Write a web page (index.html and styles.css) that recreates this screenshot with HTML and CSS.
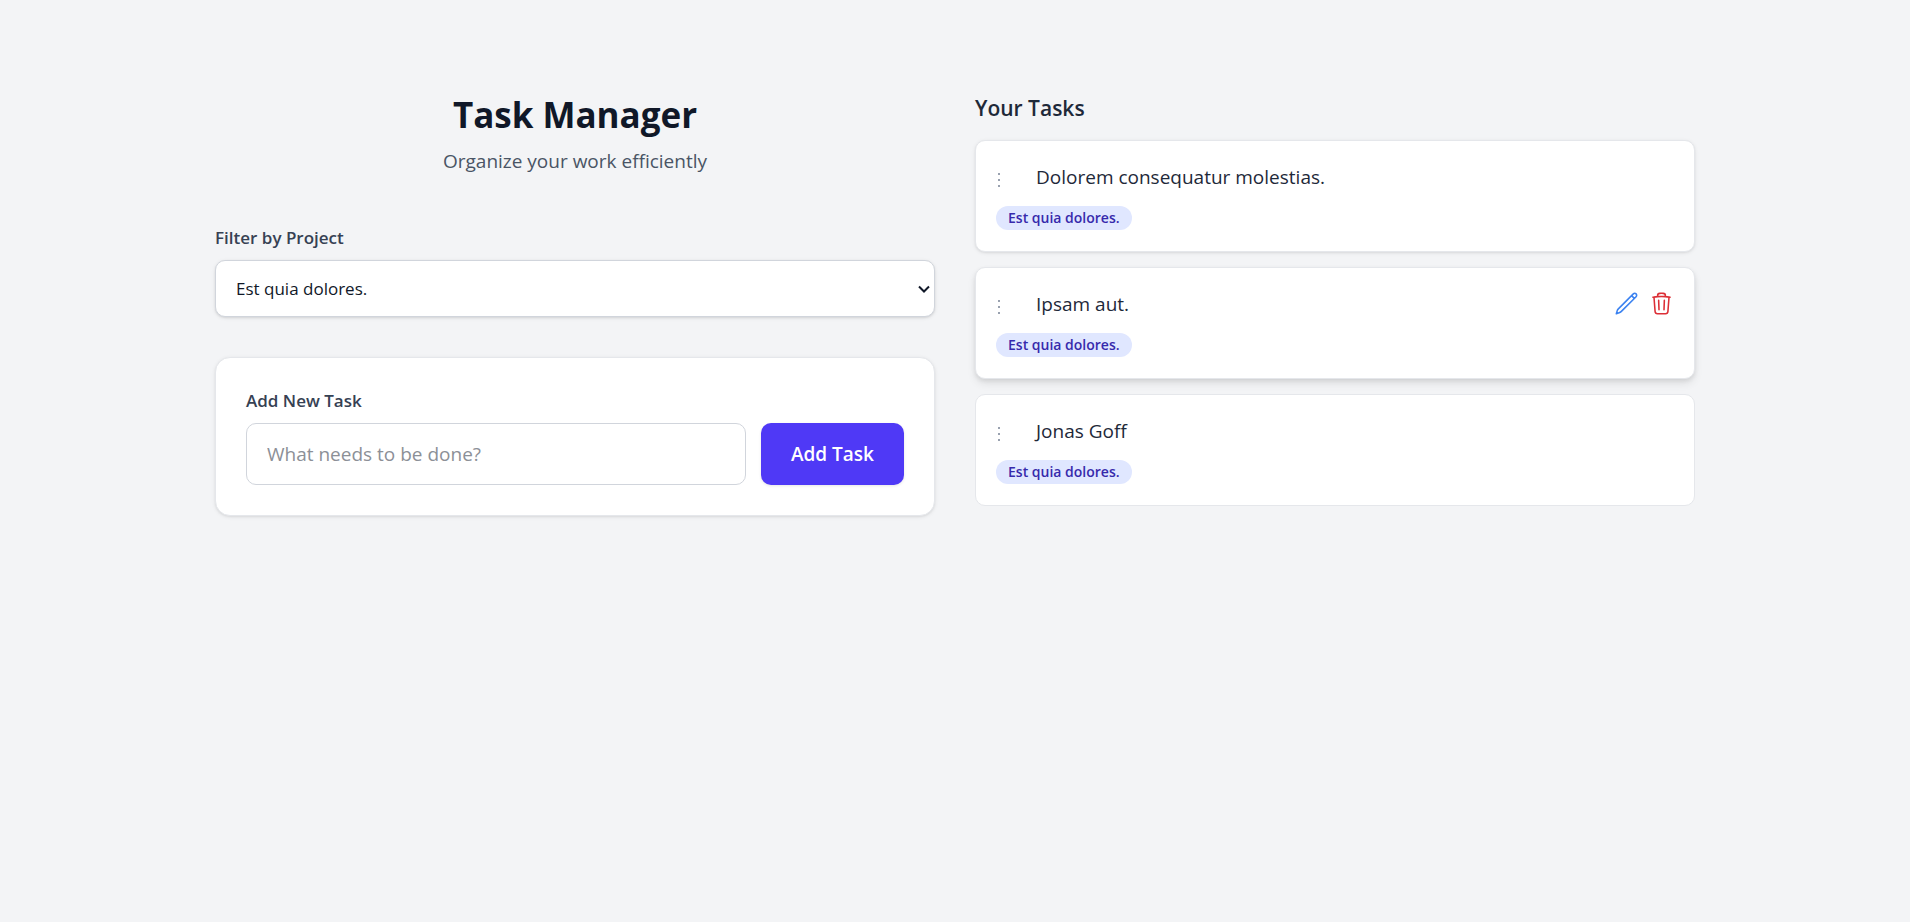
FILE: index.html
```html
<!DOCTYPE html>
<html lang="en">
<head>
<meta charset="utf-8">
<meta name="viewport" content="width=device-width, initial-scale=1">
<title>Task Manager</title>
<link rel="stylesheet" href="styles.css">
</head>
<body>
<main class="page">
  <section class="column">
    <header class="intro">
      <h1 class="title">Task Manager</h1>
      <p class="subtitle">Organize your work efficiently</p>
    </header>
    <div class="filter">
      <label class="label" for="project">Filter by Project</label>
      <div class="select-wrap">
        <select class="select" id="project">
          <option>Est quia dolores.</option>
        </select>
        <svg class="chevron" viewBox="0 0 12 8" aria-hidden="true"><path d="M1 1.5l5 5 5-5"/></svg>
      </div>
    </div>
    <form class="panel">
      <label class="label" for="task">Add New Task</label>
      <div class="panel-row">
        <input class="input" id="task" type="text" placeholder="What needs to be done?">
        <button class="button" type="button">Add Task</button>
      </div>
    </form>
  </section>
  <section class="column">
    <h2 class="heading">Your Tasks</h2>
    <ul class="tasks">
      <li class="task">
        <div class="task-row">
          <svg class="handle" viewBox="0 0 6 16" aria-hidden="true"><path d="M2 1h2v2H2zM2 7h2v2H2zM2 13h2v2H2z"/></svg>
          <span class="task-name">Dolorem consequatur molestias.</span>
        </div>
        <span class="badge">Est quia dolores.</span>
      </li>
      <li class="task task-active">
        <div class="task-row">
          <svg class="handle" viewBox="0 0 6 16" aria-hidden="true"><path d="M2 1h2v2H2zM2 7h2v2H2zM2 13h2v2H2z"/></svg>
          <span class="task-name">Ipsam aut.</span>
          <button class="icon-button edit" type="button" aria-label="Edit task">
            <svg class="icon" viewBox="0 0 24 24"><path d="M16.862 4.487l1.687-1.688a1.875 1.875 0 112.652 2.652L6.832 19.82a4.5 4.5 0 01-1.897 1.13l-2.685.8.8-2.685a4.5 4.5 0 011.13-1.897L16.863 4.487zm0 0L19.5 7.125"/></svg>
          </button>
          <button class="icon-button delete" type="button" aria-label="Delete task">
            <svg class="icon" viewBox="0 0 24 24"><path d="M14.74 9l-.346 9m-4.788 0L9.26 9m9.968-3.21c.342.052.682.107 1.022.166m-1.022-.165L18.16 19.673a2.25 2.25 0 01-2.244 2.077H8.084a2.25 2.25 0 01-2.244-2.077L4.772 5.79m14.456 0a48.108 48.108 0 00-3.478-.397m-12 .562c.34-.059.68-.114 1.022-.165m0 0a48.11 48.11 0 013.478-.397m7.5 0v-.916c0-1.18-.91-2.164-2.09-2.201a51.964 51.964 0 00-3.32 0c-1.18.037-2.09 1.022-2.09 2.201v.916m7.5 0a48.667 48.667 0 00-7.5 0"/></svg>
          </button>
        </div>
        <span class="badge">Est quia dolores.</span>
      </li>
      <li class="task task-flat">
        <div class="task-row">
          <svg class="handle" viewBox="0 0 6 16" aria-hidden="true"><path d="M2 1h2v2H2zM2 7h2v2H2zM2 13h2v2H2z"/></svg>
          <span class="task-name">Jonas Goff</span>
        </div>
        <span class="badge">Est quia dolores.</span>
      </li>
    </ul>
  </section>
</main>
</body>
</html>
```

FILE: styles.css
```css
* {
  box-sizing: border-box;
}

body {
  margin: 0;
  background: #f3f4f6;
  color: #1e2939;
  font-family: "Open Sans", "Noto Sans", sans-serif;
  font-size: 19px;
  line-height: 30px;
}

h1, h2, p, ul {
  margin: 0;
  padding: 0;
}

.page {
  display: grid;
  grid-template-columns: repeat(auto-fit, minmax(min(100%, 480px), 1fr));
  gap: 40px;
  max-width: 1600px;
  margin: 0 auto;
  padding: 90px 60px;
}

.intro {
  margin-bottom: 49px;
  text-align: center;
}

.title {
  margin-bottom: 7px;
  color: #101828;
  font-size: 35px;
  font-weight: 700;
  line-height: 49px;
}

.subtitle {
  color: #4a5565;
}

.label {
  display: block;
  margin-bottom: 9px;
  color: #364153;
  font-size: 17px;
  font-weight: 600;
  line-height: 26px;
}

.select-wrap {
  display: grid;
  align-items: center;
}

.select {
  grid-area: 1 / 1;
  width: 100%;
  padding: 15px 20px;
  appearance: none;
  border: 1px solid #d1d5dc;
  border-radius: 10px;
  background: #fff;
  box-shadow: 0 1px 4px rgb(0 0 0 / 8%), 0 1px 2px rgb(0 0 0 / 8%);
  color: #101828;
  font: inherit;
  font-size: 17px;
  line-height: 25px;
}

.chevron {
  grid-area: 1 / 1;
  justify-self: end;
  width: 12px;
  height: 8px;
  margin-right: 5px;
  fill: none;
  stroke: #101828;
  stroke-width: 2;
  pointer-events: none;
}

.panel {
  margin-top: 40px;
  padding: 30px;
  border: 1px solid #e5e7eb;
  border-radius: 15px;
  background: #fff;
  box-shadow: 0 1px 4px rgb(0 0 0 / 8%), 0 1px 2px rgb(0 0 0 / 5%);
}

.panel-row {
  display: flex;
  gap: 15px;
}

.input {
  flex: 1;
  min-width: 0;
  padding: 15px 20px;
  border: 1px solid #d1d5dc;
  border-radius: 10px;
  background: #fff;
  color: #101828;
  font: inherit;
}

.input::placeholder {
  color: #8c9097;
}

.button {
  padding: 16px 30px;
  border: 0;
  border-radius: 10px;
  background: #4f39f6;
  box-shadow: 0 1px 3px rgb(0 0 0 / 10%);
  color: #fff;
  font: inherit;
  font-weight: 600;
}

.heading {
  margin-bottom: 13px;
  color: #1e2939;
  font-size: 21px;
  font-weight: 600;
  line-height: 37px;
}

.tasks {
  display: grid;
  gap: 15px;
  list-style: none;
}

.task {
  padding: 20px 20px 21px;
  border: 1px solid #e5e7eb;
  border-radius: 10px;
  background: #fff;
  box-shadow: 0 1px 4px rgb(0 0 0 / 8%), 0 1px 2px rgb(0 0 0 / 5%);
}

.task-active {
  box-shadow: 0 5px 8px rgb(0 0 0 / 8%), 0 2px 4px rgb(0 0 0 / 8%);
}

.task-flat {
  box-shadow: none;
}

.task-row {
  display: flex;
  align-items: center;
  gap: 10px;
  height: 31px;
  margin-bottom: 14px;
}

.handle {
  width: 6px;
  height: 16px;
  margin: 7px 24px 0 0;
  fill: #99a1af;
}

.task-name {
  flex: 1;
}

.icon-button {
  display: flex;
  padding: 0;
  border: 0;
  background: none;
}

.icon {
  width: 25px;
  height: 25px;
  fill: none;
  stroke: currentColor;
  stroke-width: 1.5;
  stroke-linecap: round;
  stroke-linejoin: round;
}

.edit {
  color: #3b82f0;
}

.delete {
  color: #dc2f36;
}

.badge {
  display: block;
  width: fit-content;
  padding: 0 12px;
  border-radius: 12px;
  background: #e0e7ff;
  color: #372aac;
  font-size: 14px;
  font-weight: 600;
  line-height: 24px;
}
```
